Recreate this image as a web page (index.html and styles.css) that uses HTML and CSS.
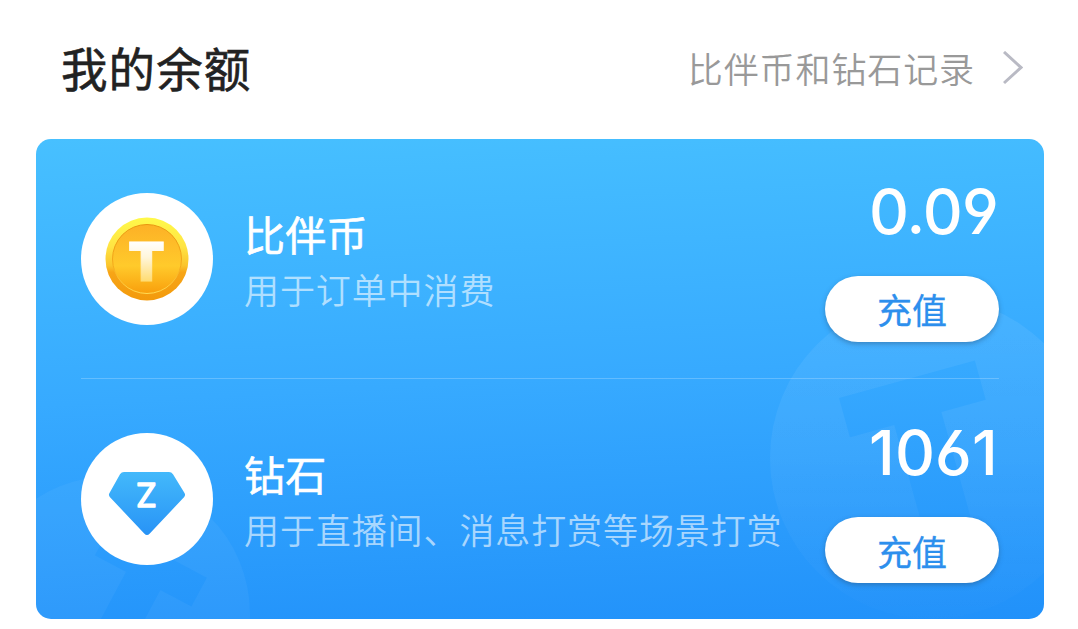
FILE: index.html
```html
<!DOCTYPE html>
<html lang="zh-CN">
<head>
    <meta charset="UTF-8">
    <meta name="viewport" content="width=device-width, initial-scale=1.0">
    <title>我的余额</title>
    <link rel="stylesheet" href="styles.css">
</head>
<body>
    <header class="header">
        <h1>我的余额</h1>
        <a class="record-link" href="#">
            <span>比伴币和钻石记录</span>
            <svg class="arrow" width="20" height="34" viewBox="0 0 20 34">
                <path d="M1 1L18 16.500L1 32" />
            </svg>
        </a>
    </header>
    <main class="card">
        <svg class="card-bg" width="1008" height="480" viewBox="0 0 1008 480">
            <defs>
                <linearGradient id="fade" x1="0" y1="0" x2="0" y2="1">
                    <stop offset="0" stop-color="#fff" stop-opacity="0.07" />
                    <stop offset="0.5" stop-color="#fff" stop-opacity="0.055" />
                    <stop offset="1" stop-color="#fff" stop-opacity="0.01" />
                </linearGradient>
                <mask id="coin-mask" maskUnits="userSpaceOnUse" x="0" y="0" width="1008" height="480">
                    <rect width="1008" height="480" fill="#fff" />
                    <text class="mark" font-size="212" transform="translate(872 244) rotate(-15.5)" y="154">T</text>
                </mask>
                <mask id="left-mask" maskUnits="userSpaceOnUse" x="0" y="0" width="1008" height="480">
                    <rect width="1008" height="480" fill="#fff" />
                    <text class="mark" font-size="162" transform="translate(121 416) rotate(28)" y="118">T</text>
                </mask>
            </defs>
            <circle cx="895" cy="319" r="161" fill="url(#fade)" mask="url(#coin-mask)" />
            <circle cx="76" cy="475" r="138" fill="#fff" fill-opacity="0.045" mask="url(#left-mask)" />
        </svg>
        <section class="row">
            <div class="icon">
                <svg width="84" height="84" viewBox="0 0 84 84">
                    <defs>
                        <linearGradient id="rim" x1="0" y1="0" x2="0" y2="1">
                            <stop offset="0" stop-color="#fff94a" />
                            <stop offset="0.35" stop-color="#ffe443" />
                            <stop offset="0.58" stop-color="#fbc52c" />
                            <stop offset="0.66" stop-color="#f7a517" />
                            <stop offset="1" stop-color="#f39a0c" />
                        </linearGradient>
                        <linearGradient id="face" x1="0" y1="0" x2="0" y2="1">
                            <stop offset="0" stop-color="#fdb126" />
                            <stop offset="0.6" stop-color="#ffca2b" />
                            <stop offset="1" stop-color="#f99f0c" />
                        </linearGradient>
                        <linearGradient id="edge" x1="0" y1="0" x2="0" y2="1">
                            <stop offset="0" stop-color="#e9940f" />
                            <stop offset="0.6" stop-color="#f4a91b" />
                            <stop offset="1" stop-color="#ffdb53" />
                        </linearGradient>
                        <linearGradient id="letter" gradientUnits="userSpaceOnUse" x1="0" y1="24" x2="0" y2="64">
                            <stop offset="0" stop-color="#fff" />
                            <stop offset="0.4" stop-color="#fff6dc" />
                            <stop offset="1" stop-color="#ffdc72" />
                        </linearGradient>
                    </defs>
                    <circle cx="42" cy="42" r="41.5" fill="url(#rim)" />
                    <circle cx="42" cy="42" r="34.5" fill="url(#face)" stroke="url(#edge)" />
                    <text class="coin-letter" x="41.5" y="63.5">T</text>
                </svg>
            </div>
            <div class="info">
                <h2>比伴币</h2>
                <p>用于订单中消费</p>
            </div>
            <div class="side">
                <div class="amount">0.09</div>
                <button>充值</button>
            </div>
        </section>
        <section class="row">
            <div class="icon">
                <svg width="84" height="84" viewBox="0 0 84 84">
                    <defs>
                        <linearGradient id="gem" x1="0" y1="0" x2="0" y2="1">
                            <stop offset="0" stop-color="#43b9fb" />
                            <stop offset="1" stop-color="#2893f6" />
                        </linearGradient>
                    </defs>
                    <path fill="url(#gem)" d="M19 15H64Q66.500 15 68 17.200L79.500 36Q80.800 38 79.200 40L44.800 76.500Q42 79.500 39.200 76.500L4.800 40Q3.200 38 4.500 36L15 17.200Q16.500 15 19 15Z" />
                    <text class="gem-letter" x="41.500" y="50">Z</text>
                </svg>
            </div>
            <div class="info">
                <h2>钻石</h2>
                <p>用于直播间、消息打赏等场景打赏</p>
            </div>
            <div class="side">
                <div class="amount">1061</div>
                <button>充值</button>
            </div>
        </section>
    </main>
</body>
</html>
```

FILE: styles.css
```css
* {
    box-sizing: border-box;
}
body {
    font-family: "Noto Sans CJK SC", sans-serif;
    margin: 0;
    background-color: #fff;
}
h1, h2, p {
    margin: 0;
}
.header {
    height: 139px;
    padding: 0 55px 4px 61px;
    display: flex;
    align-items: center;
    justify-content: space-between;
}
h1 {
    font-size: 46.5px;
    font-weight: 400;
    line-height: 60px;
    letter-spacing: 1.1px;
    margin-top: -2px;
    color: #222;
    -webkit-text-stroke: 0.6px #222;
}
.record-link {
    display: flex;
    align-items: center;
    gap: 28px;
    font-size: 35px;
    font-weight: 350;
    line-height: 50px;
    letter-spacing: 0.9px;
    color: #999;
    text-decoration: none;
}
.arrow {
    fill: none;
    stroke: #b9bac4;
    stroke-width: 3;
}
.card {
    position: relative;
    width: 1008px;
    height: 480px;
    margin-left: 36px;
    padding: 0 45px;
    border-radius: 15px;
    overflow: hidden;
    background: linear-gradient(177deg, #47c0ff 0%, #37aaff 50%, #2191fa 100%);
}
.card-bg {
    position: absolute;
    top: 0;
    left: 0;
}
.mark {
    font-family: Inter, sans-serif;
    font-weight: 900;
    text-anchor: middle;
    fill: #000;
    stroke: #000;
    stroke-width: 7;
}
.row {
    position: relative;
    display: flex;
    align-items: center;
    height: 240px;
}
.row:first-of-type {
    border-bottom: 1px solid rgba(255, 255, 255, 0.22);
}
.icon {
    width: 132px;
    height: 132px;
    border-radius: 50%;
    background-color: #fff;
    display: flex;
    align-items: center;
    justify-content: center;
}
.coin-letter {
    font-family: Inter, sans-serif;
    font-size: 53px;
    font-weight: 900;
    text-anchor: middle;
    fill: url(#letter);
    stroke: url(#letter);
    stroke-width: 1;
}
.gem-letter {
    font-family: Inter, sans-serif;
    font-size: 33px;
    font-weight: 400;
    text-anchor: middle;
    fill: #fff;
    stroke: #fff;
    stroke-width: 1.4;
    stroke-linejoin: round;
}
.info {
    flex: 1;
    margin-left: 31px;
    padding-top: 4px;
    color: #fff;
}
h2 {
    font-size: 41px;
    font-weight: 400;
    line-height: 55px;
    letter-spacing: 0.3px;
    -webkit-text-stroke: 0.6px #fff;
}
p {
    font-size: 35px;
    font-weight: 350;
    line-height: 55px;
    letter-spacing: 0.9px;
    white-space: nowrap;
    color: rgba(255, 255, 255, 0.6);
}
.side {
    display: flex;
    flex-direction: column;
    align-items: flex-end;
    gap: 29px;
    padding-top: 1px;
}
.amount {
    font-family: Inter, sans-serif;
    font-size: 62px;
    font-weight: 500;
    font-feature-settings: "cv03", "cv04";
    line-height: 70px;
    letter-spacing: -0.8px;
    padding-right: 1px;
    color: #fff;
}
.row:last-of-type .side {
    padding-top: 3px;
}
.row:last-of-type .amount {
    letter-spacing: 0.2px;
}
button {
    width: 174px;
    height: 66px;
    padding: 0;
    border: none;
    border-radius: 33px;
    background-color: #fff;
    box-shadow: 0 2px 5px rgba(40, 80, 120, 0.45);
    font-family: inherit;
    font-size: 35px;
    font-weight: 400;
    -webkit-text-stroke: 0.3px #2d8fed;
    color: #2d8fed;
}
```
